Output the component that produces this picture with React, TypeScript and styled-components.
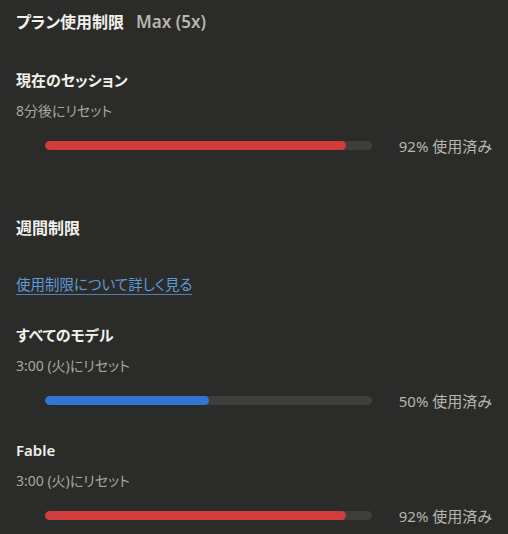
import React from "react";
import styled, { createGlobalStyle } from "styled-components";

const GlobalStyle = createGlobalStyle`
  html, body {
    margin: 0;
    padding: 0;
    background: #2b2b29;
  }
  body {
    font-family: "Noto Sans", "Noto Sans CJK JP", sans-serif;
    font-feature-settings: "palt";
    -webkit-font-smoothing: antialiased;
  }
`;

const SPanel = styled.div`
  width: 508px;
  height: 534px;
  box-sizing: border-box;
  padding: 11px 16px 0 16px;
  background: #2b2b29;
  color: #f2f1ec;
  display: flex;
  flex-direction: column;
  overflow: hidden;
`;

const STitle = styled.div`
  display: flex;
  align-items: baseline;
  gap: 12px;
  height: 22px;
  line-height: 22px;
  font-size: 16px;
  font-weight: 700;
`;

const SPlan = styled.span`
  font-size: 17px;
  font-weight: 600;
  color: #b8b6ae;
`;

const SHeading = styled.div<{ $top: number }>`
  margin-top: ${(p) => p.$top}px;
  height: 22px;
  line-height: 22px;
  font-size: 16px;
  font-weight: 700;
`;

const SLabel = styled.div<{ $top: number }>`
  margin-top: ${(p) => p.$top}px;
  height: 20px;
  line-height: 20px;
  font-size: 15px;
  font-weight: 600;
  color: #f2f1ec;
`;

const SReset = styled.div`
  margin-top: 11px;
  height: 20px;
  line-height: 20px;
  font-size: 14px;
  color: #a9a79f;
`;

const SLink = styled.a`
  margin-top: 35px;
  align-self: flex-start;
  height: 20px;
  line-height: 20px;
  font-size: 14.5px;
  color: #5d9ad8;
  text-decoration: none;
  border-bottom: 1px solid #4f7fb5;
  cursor: pointer;
`;

const SBarRow = styled.div`
  margin-top: 14px;
  height: 20px;
  display: flex;
  align-items: center;
  padding-left: 29px;
`;

const STrack = styled.div`
  width: 327px;
  height: 9px;
  border-radius: 5px;
  background: #3e3e3c;
  overflow: hidden;
`;

const SFill = styled.div<{ $color: string }>`
  height: 100%;
  border-radius: 5px;
  background: ${(p) => p.$color};
`;

const SUsed = styled.div`
  margin-left: auto;
  font-size: 15px;
  color: #b8b6ae;
  white-space: nowrap;
`;

type Limit = { label: string; reset: string; pct: number; top: number };

const RED = "#d13d3d";
const BLUE = "#2f77d1";

const UsageBar = ({ pct }: { pct: number }) => (
  <SBarRow>
    <STrack>
      <SFill $color={pct >= 80 ? RED : BLUE} style={{ width: `${pct}%` }} />
    </STrack>
    <SUsed>{pct}% 使用済み</SUsed>
  </SBarRow>
);

const LimitBlock = ({ label, reset, pct, top }: Limit) => (
  <>
    <SLabel $top={top}>{label}</SLabel>
    <SReset>{reset}</SReset>
    <UsageBar pct={pct} />
  </>
);

const weekly: Limit[] = [
  { label: "すべてのモデル", reset: "3:00 (火)にリセット", pct: 50, top: 30 },
  { label: "Fable", reset: "3:00 (火)にリセット", pct: 92, top: 30 },
];

export default function App() {
  return (
    <>
      <GlobalStyle />
      <SPanel>
        <STitle>
          プラン使用制限 <SPlan>Max (5x)</SPlan>
        </STitle>
        <LimitBlock label="現在のセッション" reset="8分後にリセット" pct={92} top={37} />

        <SHeading $top={62}>週間制限</SHeading>
        <SLink>使用制限について詳しく見る</SLink>
        {weekly.map((l) => (
          <LimitBlock key={l.label} {...l} />
        ))}
      </SPanel>
    </>
  );
}
